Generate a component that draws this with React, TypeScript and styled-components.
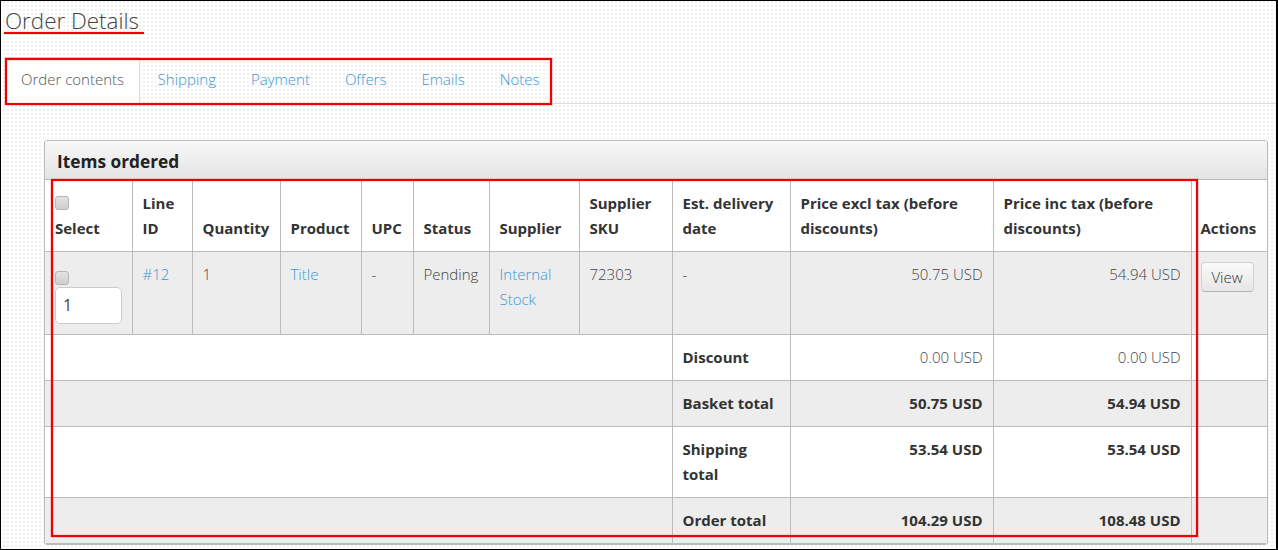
import styled, { createGlobalStyle } from "styled-components";

const GlobalStyle = createGlobalStyle`
  html, body {
    margin: 0;
    padding: 0;
    background: #fff;
  }
  body {
    font-family: "Open Sans", "Liberation Sans", sans-serif;
    font-weight: 300;
    font-size: 15px;
    color: #444;
  }
`;

const tabs = ["Shipping", "Payment", "Offers", "Emails", "Notes"];

const App = () => {
  return (
    <>
      <GlobalStyle />
      <Frame>
        <Title>Order Details</Title>
        <TabBar>
          <ActiveTab>Order contents</ActiveTab>
          {tabs.map((t) => (
            <Tab key={t}>{t}</Tab>
          ))}
        </TabBar>
        <Panel>
          <PanelHead>Items ordered</PanelHead>
          <Table>
            <colgroup>
              <col style={{ width: 87 }} />
              <col style={{ width: 60 }} />
              <col style={{ width: 88 }} />
              <col style={{ width: 81 }} />
              <col style={{ width: 52 }} />
              <col style={{ width: 76 }} />
              <col style={{ width: 90 }} />
              <col style={{ width: 93 }} />
              <col style={{ width: 118 }} />
              <col style={{ width: 203 }} />
              <col style={{ width: 198 }} />
              <col />
            </colgroup>
            <thead>
              <tr>
                <Th>
                  <Check />
                  <br />
                  Select
                </Th>
                <Th>
                  Line
                  <br />
                  ID
                </Th>
                <Th>Quantity</Th>
                <Th>Product</Th>
                <Th>UPC</Th>
                <Th>Status</Th>
                <Th>Supplier</Th>
                <Th>
                  Supplier
                  <br />
                  SKU
                </Th>
                <Th>
                  Est. delivery
                  <br />
                  date
                </Th>
                <Th>
                  Price excl tax (before
                  <br />
                  discounts)
                </Th>
                <Th>
                  Price inc tax (before
                  <br />
                  discounts)
                </Th>
                <Th $tight>Actions</Th>
              </tr>
            </thead>
            <tbody>
              <GreyRow>
                <Td>
                  <RowCheck />
                  <QtyInput defaultValue="1" />
                </Td>
                <Td>
                  <Link>#12</Link>
                </Td>
                <Td>1</Td>
                <Td>
                  <Link>Title</Link>
                </Td>
                <Td>-</Td>
                <Td>Pending</Td>
                <Td>
                  <Link>
                    Internal
                    <br />
                    Stock
                  </Link>
                </Td>
                <Td>72303</Td>
                <Td>-</Td>
                <Td $right>50.75 USD</Td>
                <Td $right>54.94 USD</Td>
                <Td $tight>
                  <ViewButton>View</ViewButton>
                </Td>
              </GreyRow>
              <tr>
                <Td colSpan={8} />
                <Td $bold>Discount</Td>
                <Td $right>0.00 USD</Td>
                <Td $right>0.00 USD</Td>
                <Td />
              </tr>
              <GreyRow>
                <Td colSpan={8} />
                <Td $bold>Basket total</Td>
                <Td $right $bold>
                  50.75 USD
                </Td>
                <Td $right $bold>
                  54.94 USD
                </Td>
                <Td />
              </GreyRow>
              <tr>
                <Td colSpan={8} />
                <Td $bold>
                  Shipping
                  <br />
                  total
                </Td>
                <Td $right $bold>
                  53.54 USD
                </Td>
                <Td $right $bold>
                  53.54 USD
                </Td>
                <Td />
              </tr>
              <GreyRow>
                <Td colSpan={8} />
                <Td $bold>Order total</Td>
                <Td $right $bold>
                  104.29 USD
                </Td>
                <Td $right $bold>
                  108.48 USD
                </Td>
                <Td />
              </GreyRow>
            </tbody>
          </Table>
        </Panel>
        <TitleMark />
        <TabsMark />
        <TableMark />
      </Frame>
    </>
  );
};

const Frame = styled.div`
  position: relative;
  box-sizing: border-box;
  width: 1278px;
  height: 550px;
  overflow: hidden;
  border: 1px solid #000;
  border-right-width: 2px;
  background-color: #fff;
  background-image: conic-gradient(#f1f1f1 25%, transparent 0);
  background-size: 4px 4px;
`;

const Title = styled.h1`
  margin: 0;
  padding: 6px 0 0 4px;
  height: 56px;
  box-sizing: border-box;
  font-size: 22.4px;
  line-height: 28px;
  font-weight: 300;
  color: #444;
`;

const TabBar = styled.div`
  display: flex;
  height: 46px;
  margin-left: 4px;
  border-bottom: 1px solid #ddd;
`;

const Tab = styled.a`
  padding: 0 17.5px;
  line-height: 44px;
  font-size: 15px;
  color: #3a97d3;
`;

const ActiveTab = styled(Tab)`
  padding: 0 15px 0 16px;
  background: #fff;
  color: #555;
  border-right: 1px solid #ddd;
  border-top: 1px solid #ddd;
  height: 47px;
  line-height: 42px;
  box-sizing: border-box;
`;

const Panel = styled.section`
  box-sizing: border-box;
  width: 1224px;
  margin: 36px 0 0 43px;
  border: 1px solid #bbb;
  border-radius: 3px;
  overflow: hidden;
`;

const PanelHead = styled.div`
  height: 39px;
  box-sizing: border-box;
  padding: 0 12px;
  line-height: 41px;
  font-size: 17.3px;
  font-weight: 700;
  color: #222;
  background: linear-gradient(#f7f7f7, #e4e4e4);
  border-bottom: 1px solid #bbb;
`;

const Table = styled.table`
  width: 100%;
  table-layout: fixed;
  border-collapse: collapse;
  background: #fff;
  font-size: 15px;
  line-height: 25px;
`;

const Th = styled.th<{ $tight?: boolean }>`
  box-sizing: border-box;
  height: 71px;
  padding: 10px ${(p) => (p.$tight ? "9px" : "10px")} 10px;
  vertical-align: bottom;
  text-align: left;
  font-weight: 700;
  color: #333;
  white-space: nowrap;
  border-left: 1px solid #bbb;
  border-bottom: 1px solid #bbb;
  &:first-child {
    border-left: 0;
  }
`;

const Td = styled.td<{ $right?: boolean; $bold?: boolean; $tight?: boolean }>`
  box-sizing: border-box;
  padding: 10px ${(p) => (p.$tight ? "9px" : "10px")};
  vertical-align: top;
  text-align: ${(p) => (p.$right ? "right" : "left")};
  font-weight: ${(p) => (p.$bold ? 700 : 300)};
  color: ${(p) => (p.$bold ? "#333" : "#444")};
  border-left: 1px solid #bbb;
  border-bottom: 1px solid #bbb;
  &:first-child {
    border-left: 0;
  }
`;

const GreyRow = styled.tr`
  background: #ededed;
`;

const Link = styled.a`
  color: #3a97d3;
`;

const Check = styled.span`
  display: inline-block;
  box-sizing: border-box;
  width: 14px;
  height: 14px;
  margin-top: -2px;
  vertical-align: middle;
  border: 1px solid #b5b5b5;
  border-radius: 3px;
  background: linear-gradient(#e2e2e2, #cfcfcf);
`;

const RowCheck = styled(Check)`
  display: block;
  margin: 9px 0 2px;
`;

const QtyInput = styled.input`
  display: block;
  box-sizing: border-box;
  width: 67px;
  height: 37px;
  padding: 0 7px;
  border: 1px solid #ccc;
  border-radius: 5px;
  background: #fff;
  font: 400 16px "Open Sans", "Liberation Sans", sans-serif;
  color: #444;
`;

const ViewButton = styled.button`
  display: block;
  box-sizing: border-box;
  width: 53px;
  height: 30px;
  padding: 0;
  border: 1px solid #d2d2d2;
  border-bottom-color: #b5b5b5;
  border-radius: 4px;
  background: linear-gradient(#fafafa, #e6e6e6);
  font: 300 15px "Open Sans", "Liberation Sans", sans-serif;
  color: #333;
`;

const Mark = styled.div`
  position: absolute;
  box-sizing: border-box;
  border: 2px solid #f00000;
  box-shadow: 0 0 1px #f00000, inset 0 0 1px #f00000;
  pointer-events: none;
`;

const TitleMark = styled(Mark)`
  left: 3px;
  top: 31px;
  width: 140px;
  height: 2px;
  border-width: 2px 0 0;
`;

const TabsMark = styled(Mark)`
  left: 4px;
  top: 57px;
  width: 547px;
  height: 47px;
`;

const TableMark = styled(Mark)`
  left: 50px;
  top: 178px;
  width: 1147px;
  height: 358px;
`;

export default App;
